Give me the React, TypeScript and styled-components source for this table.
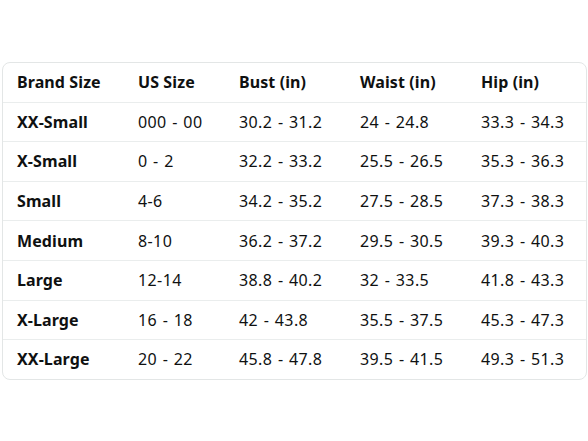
import styled, { createGlobalStyle } from "styled-components";

const GlobalStyle = createGlobalStyle`
  html, body {
    margin: 0;
    padding: 0;
    background: #ffffff;
  }
  body {
    font-family: "Noto Sans", "Open Sans", Arial, sans-serif;
    color: #0f1111;
  }
`;

const Page = styled.div`
  width: 588px;
  height: 441px;
  box-sizing: border-box;
  padding: 62px 1px 0 2px;
`;

const Chart = styled.div`
  border: 1px solid #e3e6e6;
  border-radius: 8px;
  overflow: hidden;
`;

const Row = styled.div<{ last?: boolean }>`
  display: grid;
  grid-template-columns: 121px 101px 121px 121px 1fr;
  height: 38.6px;
  align-items: center;
  border-bottom: ${(p) => (p.last ? "none" : "1px solid #eaeded")};
`;

const Cell = styled.div<{ bold?: boolean }>`
  padding-left: 14px;
  font-size: 16px;
  font-weight: ${(p) => (p.bold ? 700 : 400)};
  letter-spacing: ${(p) => (p.bold ? "0.1px" : "0.4px")};
  word-spacing: ${(p) => (p.bold ? "0" : "1px")};
  white-space: nowrap;
`;

const headers = ["Brand Size", "US Size", "Bust (in)", "Waist (in)", "Hip (in)"];

const rows = [
  ["XX-Small", "000 - 00", "30.2 - 31.2", "24 - 24.8", "33.3 - 34.3"],
  ["X-Small", "0 - 2", "32.2 - 33.2", "25.5 - 26.5", "35.3 - 36.3"],
  ["Small", "4-6", "34.2 - 35.2", "27.5 - 28.5", "37.3 - 38.3"],
  ["Medium", "8-10", "36.2 - 37.2", "29.5 - 30.5", "39.3 - 40.3"],
  ["Large", "12-14", "38.8 - 40.2", "32 - 33.5", "41.8 - 43.3"],
  ["X-Large", "16 - 18", "42 - 43.8", "35.5 - 37.5", "45.3 - 47.3"],
  ["XX-Large", "20 - 22", "45.8 - 47.8", "39.5 - 41.5", "49.3 - 51.3"],
];

export default function App() {
  return (
    <>
      <GlobalStyle />
      <Page>
        <Chart>
          <Row>
            {headers.map((h) => (
              <Cell bold key={h}>
                {h}
              </Cell>
            ))}
          </Row>
          {rows.map((r, i) => (
            <Row key={r[0]} last={i === rows.length - 1}>
              {r.map((v, j) => (
                <Cell bold={j === 0} key={j}>
                  {v}
                </Cell>
              ))}
            </Row>
          ))}
        </Chart>
      </Page>
    </>
  );
}
